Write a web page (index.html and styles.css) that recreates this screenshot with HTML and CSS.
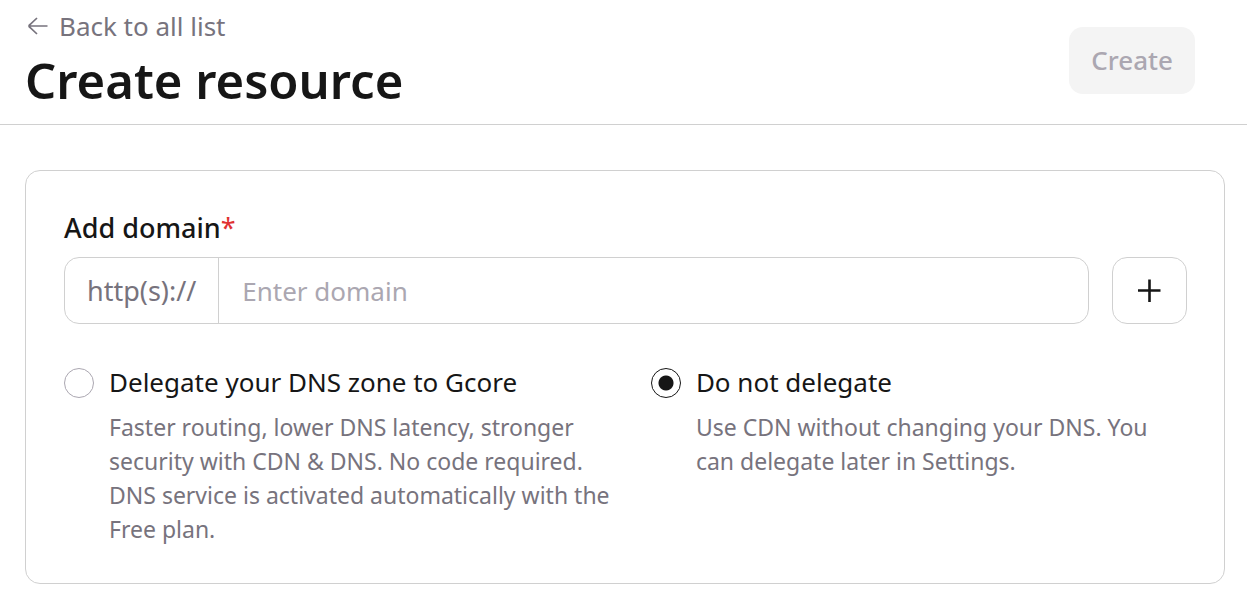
FILE: index.html
```html
<!DOCTYPE html>
<html lang="en">
<head>
    <meta charset="UTF-8">
    <meta name="viewport" content="width=device-width, initial-scale=1.0">
    <title>Create resource</title>
    <link rel="stylesheet" href="styles.css">
</head>
<body>

    <header class="page-header">
        <div class="page-heading">
            <a class="back-link" href="#">
                <svg class="back-icon" viewBox="0 0 24 20" aria-hidden="true">
                    <path d="M22.5 10H4M12 2L5 8.500Q3 10 5 11.500L12 18"/>
                </svg>
                Back to all list
            </a>
            <h1>Create resource</h1>
        </div>
        <button class="create-button" type="submit" form="resource-form" disabled>Create</button>
    </header>

    <main>
        <form class="card" id="resource-form">
            <label class="field-label" for="domain">Add domain<span class="required">*</span></label>
            <div class="domain-row">
                <div class="domain-field">
                    <span class="prefix">http(s)://</span>
                    <input class="domain-input" type="text" id="domain" placeholder="Enter domain" required>
                </div>
                <button class="add-button" type="button" aria-label="Add">
                    <svg class="add-icon" viewBox="0 0 24 24" aria-hidden="true">
                        <path d="M11.500 0.500V23M0 11.500H22.500"/>
                    </svg>
                </button>
            </div>

            <div class="options">
                <div class="option">
                    <input class="radio" type="radio" name="dns" id="delegate">
                    <div>
                        <label class="option-title" for="delegate">Delegate your DNS zone to Gcore</label>
                        <p class="option-text">Faster routing, lower DNS latency, stronger security with CDN &amp; DNS. No code required. DNS service is activated automatically with the Free plan.</p>
                    </div>
                </div>
                <div class="option">
                    <input class="radio" type="radio" name="dns" id="no-delegate" checked>
                    <div>
                        <label class="option-title" for="no-delegate">Do not delegate</label>
                        <p class="option-text">Use CDN without changing your DNS. You can delegate later in Settings.</p>
                    </div>
                </div>
            </div>
        </form>
    </main>

</body>
</html>
```
FILE: styles.css
```css
* {
    box-sizing: border-box;
}

body {
    margin: 0;
    font-family: "Noto Sans", sans-serif;
    font-size: 26px;
    line-height: 36px;
    background-color: #fff;
    color: #161616;
}

button, input {
    font: inherit;
}

.page-header {
    display: flex;
    justify-content: space-between;
    align-items: center;
    padding: 8px 52px 12px 25px;
    border-bottom: 1px solid #d0d0d0;
}

.back-link {
    display: flex;
    align-items: center;
    gap: 10px;
    color: #77737d;
    text-decoration: none;
}

.back-icon {
    width: 24px;
    height: 20px;
    fill: none;
    stroke: #77737d;
    stroke-width: 1.7;
}

h1 {
    margin: 4px 0 0;
    font-size: 49px;
    font-weight: 600;
    line-height: 64px;
}

.create-button {
    height: 67px;
    padding: 0 22px;
    border: none;
    border-radius: 14px;
    background-color: #f4f4f4;
    color: #aba7b1;
    font-weight: 500;
}

.card {
    margin: 45px 22px 20px 25px;
    padding: 39px 37px 37px 38px;
    border: 1px solid #d0d0d0;
    border-radius: 15px;
}

.field-label {
    display: block;
    margin-bottom: 11px;
    font-size: 27px;
    font-weight: 500;
}

.required {
    color: #e03131;
    font-weight: 400;
}

.domain-row {
    display: flex;
    gap: 23px;
}

.domain-field {
    display: flex;
    flex: 1;
    height: 67px;
    border: 1px solid #d0d0d0;
    border-radius: 15px;
    overflow: hidden;
}

.domain-field:focus-within {
    border-color: #77737d;
}

.prefix {
    display: flex;
    align-items: center;
    padding: 0 22px;
    border-right: 1px solid #d0d0d0;
    font-size: 27px;
    color: #77737d;
}

.domain-input {
    flex: 1;
    min-width: 0;
    padding: 0 23px;
    border: none;
    outline: none;
    background: none;
    color: #161616;
}

.domain-input::placeholder {
    color: #aba7b1;
    opacity: 1;
}

.add-button {
    display: flex;
    align-items: center;
    justify-content: center;
    width: 75px;
    padding: 0;
    border: 1px solid #d0d0d0;
    border-radius: 15px;
    background-color: #fff;
}

.add-icon {
    width: 24px;
    height: 24px;
    fill: none;
    stroke: #161616;
    stroke-width: 2.6;
}

.options {
    display: grid;
    grid-template-columns: 21fr 20fr;
    gap: 24px;
    margin-top: 40px;
}

.option {
    display: flex;
    gap: 15px;
}

.radio {
    flex: none;
    appearance: none;
    width: 30px;
    height: 30px;
    margin: 4px 0 0;
    border: 1px solid #aba7b1;
    border-radius: 50%;
    background-color: #fff;
}

.radio:checked {
    border-color: #161616;
    background-image: radial-gradient(circle, #161616 7px, transparent 8px);
}

.option-title {
    display: block;
}

.option-text {
    margin: 10px 0 0;
    font-size: 23px;
    line-height: 34px;
    color: #77737d;
}

@media (max-width: 768px) {
    .options {
        grid-template-columns: 1fr;
    }
}
```
